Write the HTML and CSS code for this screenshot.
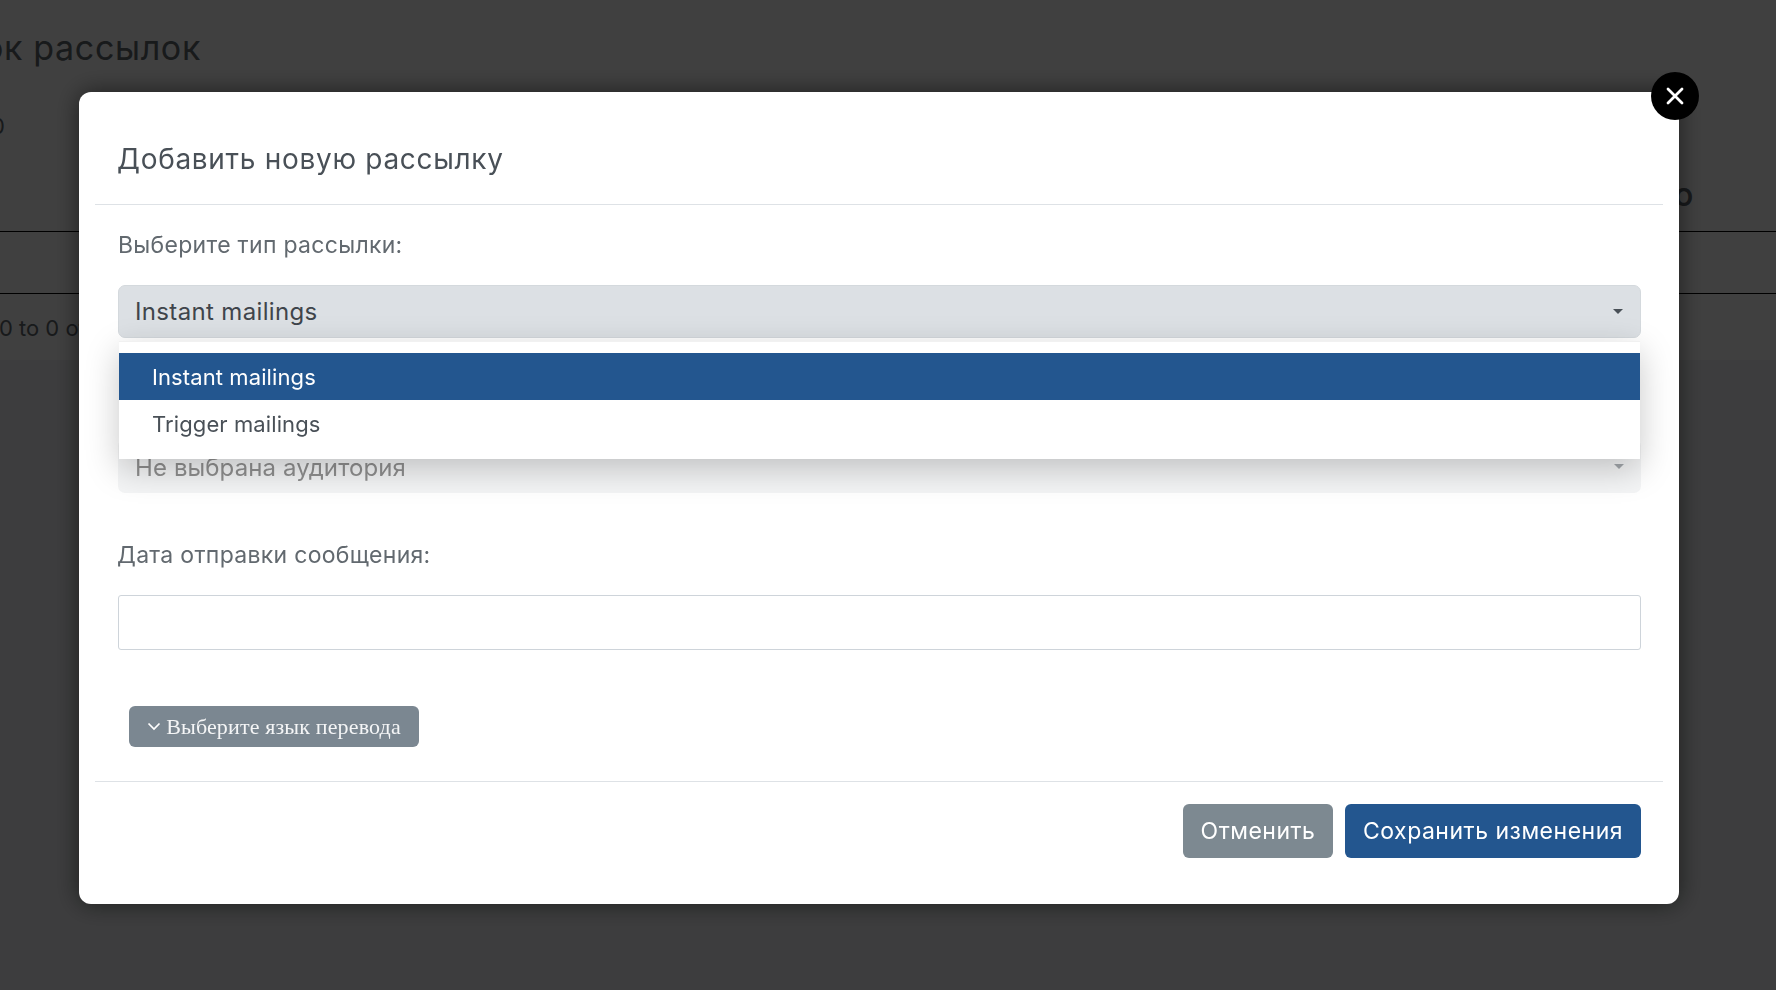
FILE: index.html
```html
<!DOCTYPE html>
<html lang="ru">
<head>
    <meta charset="UTF-8">
    <meta name="viewport" content="width=device-width, initial-scale=1.0">
    <title>Список рассылок</title>
    <link rel="stylesheet" href="styles.css">
</head>
<body>
    <div class="page">
        <h2 class="page-title">Список рассылок</h2>
        <div class="page-count">0</div>
        <div class="table-head"><span>О</span></div>
        <div class="table-empty"></div>
        <div class="table-info">Showing 0 to 0 of 0 entries</div>
    </div>

    <div class="overlay">
        <div class="modal">
            <button class="modal-close" type="button">
                <svg width="18" height="18" viewBox="0 0 18 18"><path d="M2 2 16 16M16 2 2 16" stroke="#fff" stroke-width="2.8" stroke-linecap="round"/></svg>
            </button>

            <div class="modal-header">
                <h3>Добавить новую рассылку</h3>
            </div>

            <div class="modal-body">
                <label class="field-label">Выберите тип рассылки:</label>
                <div class="select-wrap">
                    <div class="select select-open">
                        <span>Instant mailings</span>
                        <i class="caret"></i>
                    </div>
                    <ul class="dropdown">
                        <li class="active">Instant mailings</li>
                        <li>Trigger mailings</li>
                    </ul>
                </div>

                <div class="select select-disabled">
                    <span>Не выбрана аудитория</span>
                    <i class="caret"></i>
                </div>

                <label class="field-label date-label">Дата отправки сообщения:</label>
                <input class="text-input" type="text">

                <button class="lang-btn" type="button">
                    <svg width="14" height="9" viewBox="0 0 14 9"><path d="M1.5 1.5 7 7l5.5-5.5" fill="none" stroke="#fff" stroke-width="1.7"/></svg>
                    Выберите язык перевода
                </button>
            </div>

            <div class="modal-footer">
                <button class="btn btn-grey" type="button">Отменить</button>
                <button class="btn btn-blue" type="button">Сохранить изменения</button>
            </div>
        </div>
    </div>
</body>
</html>
```

FILE: styles.css
```css
* {
    box-sizing: border-box;
}

html, body {
    height: 100%;
}

body {
    margin: 0;
    overflow: hidden;
    font-family: "Inter", "Noto Sans", sans-serif;
    background-color: #f1f3f5;
    color: #495057;
}

/* page behind the modal, scrolled sideways */
.page {
    margin-left: -200px;
    width: 1976px;
    height: 360px;
    background-color: #fff;
    color: #5f676e;
    overflow: hidden;
}

.page-title {
    margin: 28px 0 0;
    padding-left: 96px;
    height: 40px;
    font-size: 34px;
    line-height: 40px;
    font-weight: 400;
    letter-spacing: 0.65px;
}

.page-count {
    margin-top: 38px;
    padding-left: 191px;
    font-size: 22px;
    line-height: 40px;
}

.table-head {
    height: 86px;
    padding: 0 83px 17px 0;
    display: flex;
    align-items: flex-end;
    justify-content: flex-end;
    border-bottom: 1px solid #000;
    font-size: 24px;
    line-height: 32px;
    font-weight: 700;
}

.table-empty {
    height: 62px;
    border-bottom: 1px solid #000;
}

.table-info {
    margin-top: 20px;
    padding-left: 103px;
    font-size: 22px;
    line-height: 28px;
}

.overlay {
    position: fixed;
    top: 0;
    left: 0;
    right: 0;
    bottom: 0;
    background-color: rgba(0, 0, 0, 0.75);
}

.modal {
    position: relative;
    margin: 92px 0 0 79px;
    width: 1600px;
    height: 812px;
    background-color: #fff;
    border-radius: 12px;
    box-shadow: 0 0 24px rgba(0, 0, 0, 0.55);
}

.modal-close {
    position: absolute;
    top: -20px;
    right: -20px;
    width: 48px;
    height: 48px;
    padding: 0;
    display: flex;
    align-items: center;
    justify-content: center;
    border: none;
    border-radius: 50%;
    background-color: #000;
}

.modal-header {
    margin: 0 16px;
    padding: 0 22px;
    height: 113px;
    border-bottom: 1px solid #dee2e6;
    display: flex;
    align-items: flex-end;
}

.modal-header h3 {
    margin: 0 0 21px;
    font-size: 28px;
    line-height: 48px;
    font-weight: 400;
    letter-spacing: 0.7px;
    color: #495057;
}

.modal-body {
    margin: 0 16px;
    padding: 24px 22px 0 23px;
    height: 577px;
    border-bottom: 1px solid #dee2e6;
}

.field-label {
    display: block;
    font-size: 23px;
    line-height: 32px;
    letter-spacing: 0.3px;
    color: #62696f;
}

.select-wrap {
    position: relative;
    margin-top: 24px;
}

.select {
    height: 53px;
    padding: 0 16px;
    display: flex;
    align-items: center;
    justify-content: space-between;
    border-radius: 7px;
    font-size: 24px;
    letter-spacing: 0.35px;
}

.select-open {
    background-color: #dce0e4;
    border: 1px solid #d4d9dd;
    color: #3f454b;
}

.select-disabled {
    margin-top: 101px;
    padding-left: 17px;
    height: 54px;
    background-color: #f4f5f6;
    color: #8f8f8f;
    letter-spacing: 0.1px;
}

.select-disabled span {
    margin-top: 3px;
}

.select-disabled .caret {
    opacity: 0.5;
}

.caret {
    width: 0;
    height: 0;
    margin-right: 1px;
    border-left: 5px solid transparent;
    border-right: 5px solid transparent;
    border-top: 5px solid #495057;
}

.dropdown {
    position: absolute;
    top: 56px;
    left: 1px;
    right: 1px;
    height: 118px;
    margin: 0;
    padding: 11px 0 0;
    list-style: none;
    background-color: #fff;
    border-top: 1px solid #f1f1f1;
    box-shadow: 0 10px 32px rgba(0, 0, 0, 0.22);
    font-size: 22px;
    letter-spacing: 0.1px;
}

.dropdown li {
    height: 47px;
    padding-left: 33px;
    display: flex;
    align-items: center;
    color: #495057;
}

.dropdown li.active {
    background-color: #23568f;
    color: #fff;
}

.date-label {
    margin: 46px 0 0 -1px;
}

.text-input {
    display: block;
    width: 100%;
    height: 55px;
    margin-top: 24px;
    border: 1px solid #ced4da;
    border-radius: 3px;
    background-color: #fff;
}

.lang-btn {
    margin: 56px 0 0 11px;
    width: 290px;
    height: 41px;
    padding: 0;
    display: flex;
    align-items: center;
    justify-content: center;
    gap: 5px;
    border: none;
    border-radius: 6px;
    background-color: #7b8791;
    color: #f4f5f6;
    font-family: "Liberation Serif", serif;
    font-size: 22px;
    letter-spacing: 0.15px;
}

.modal-footer {
    margin: 0 16px;
    padding: 22px 22px 0 0;
    display: flex;
    justify-content: flex-end;
    gap: 12px;
}

.btn {
    height: 54px;
    border: none;
    border-radius: 6px;
    color: #fff;
    font-family: inherit;
    font-size: 23px;
    letter-spacing: 0.5px;
}

.btn-grey {
    width: 150px;
    background-color: #7d8991;
}

.btn-blue {
    width: 296px;
    background-color: #23568f;
}
```
